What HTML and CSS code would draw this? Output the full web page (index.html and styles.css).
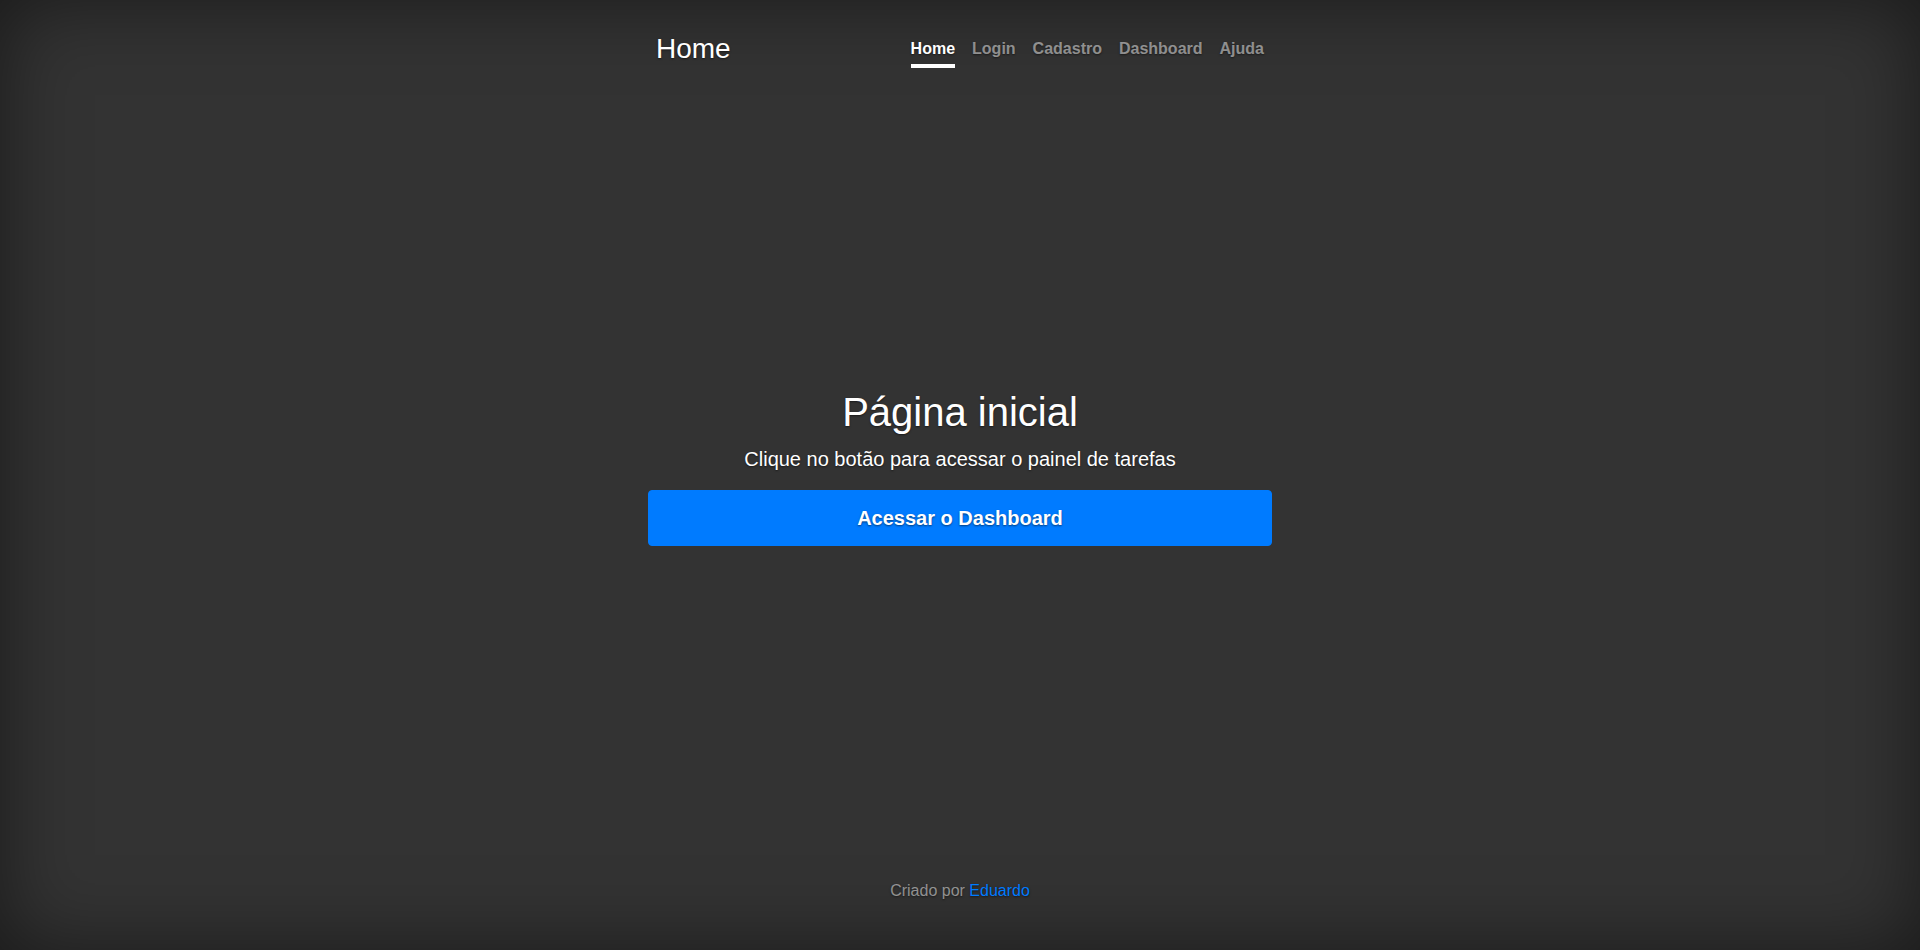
FILE: index.html
```html
<!DOCTYPE html>
<html lang="pt-br">
<head>
<meta charset="utf-8">
<title>Home</title>
<link rel="stylesheet" href="styles.css">
</head>
<body>
<div class="cover">
  <header class="masthead">
    <h3 class="brand">Home</h3>
    <nav class="nav">
      <a class="nav-link active" href="#">Home</a>
      <a class="nav-link" href="#">Login</a>
      <a class="nav-link" href="#">Cadastro</a>
      <a class="nav-link" href="#">Dashboard</a>
      <a class="nav-link" href="#">Ajuda</a>
    </nav>
  </header>
  <main class="intro">
    <h1 class="title">Página inicial</h1>
    <p class="lead">Clique no botão para acessar o painel de tarefas</p>
    <a class="button" href="#">Acessar o Dashboard</a>
  </main>
  <footer class="footer">
    <p class="credit">Criado por <a class="author" href="#">Eduardo</a></p>
  </footer>
</div>
</body>
</html>
```
FILE: styles.css
```css
*, *::before, *::after { box-sizing: border-box; }

html, body { height: 100%; }

body {
  display: flex;
  justify-content: center;
  margin: 0;
  background: #333;
  box-shadow: inset 0 0 80px rgba(0, 0, 0, .5);
  color: #fff;
  font: 16px/24px "Liberation Sans", Arial, sans-serif;
  text-align: center;
  text-shadow: 0 1px 2px rgba(0, 0, 0, .5);
}

.cover {
  display: flex;
  flex-direction: column;
  justify-content: space-between;
  width: 100%;
  max-width: 672px;
  padding: 16px 24px;
}

.masthead {
  display: flex;
  justify-content: space-between;
  align-items: flex-start;
  padding: 16px 8px;
}

.brand {
  margin: 0;
  font-size: 28px;
  font-weight: 500;
  line-height: 34px;
}

.nav { display: flex; gap: 17px; }

.nav-link {
  padding: 4px 0 2px;
  border-bottom: 4px solid transparent;
  color: rgba(255, 255, 255, .5);
  font-weight: 700;
  line-height: 26px;
  text-decoration: none;
}

.nav-link.active {
  border-bottom-color: #fff;
  color: #fff;
}

.intro { padding-bottom: 28px; }

.title {
  margin: 0 0 8px;
  font-size: 40px;
  font-weight: 500;
  line-height: 48px;
}

.lead {
  margin: 0 0 16px;
  font-size: 20px;
  line-height: 30px;
}

.button {
  display: block;
  padding: 12px 20px;
  border: 1px solid #007bff;
  border-radius: 4px;
  background: #007bff;
  color: #fff;
  font-size: 20px;
  font-weight: 700;
  line-height: 30px;
  text-decoration: none;
}

.footer {
  color: rgba(255, 255, 255, .5);
  line-height: 26px;
}

.credit { margin: 0 0 30px; }

.author { color: #007bff; text-decoration: none; }
```
